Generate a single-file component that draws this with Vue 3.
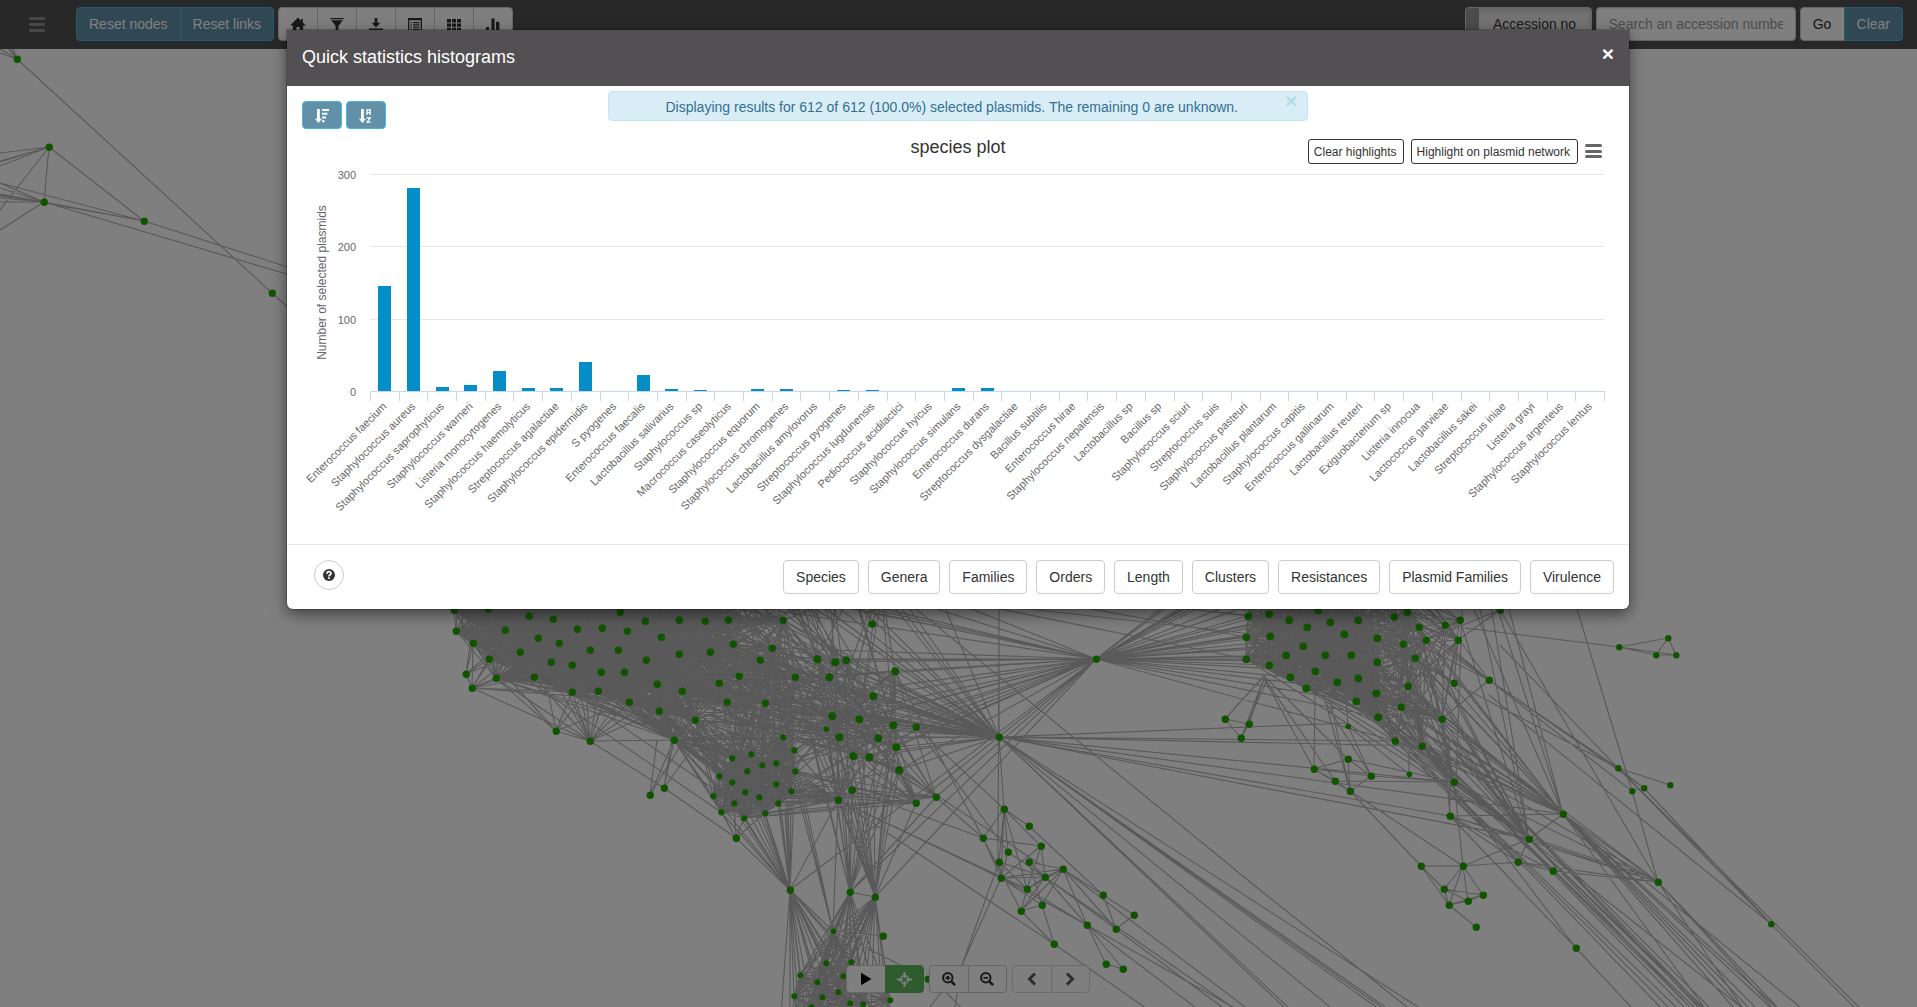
<script setup>
import { ref, computed } from 'vue'

// ---------- plasmid network ----------
const pts = (s) => s.trim().split(/\s+/).map((p) => p.split(',').map(Number))

const groups = {
  core: pts(`454,610 488,609 529,616 553,619 620,612 645,621 679,620 705,621 728,620 456,631 505,630 577,629 602,628
    627,631 661,637 538,638 559,643 733,644 489,659 520,652 590,650 618,650 679,654 710,652 551,662 572,665 646,660
    496,678 534,677 601,672 624,672 657,684 682,691 719,683 572,692 598,691 629,702 659,711 473,643`),
  rim: pts(`783,620 772,648 760,660 739,676 795,677 727,702 765,703 695,720 674,740`),
  mid: pts(`817,659 835,662 846,660 829,677 895,671 873,696 832,716 859,719 893,725 839,737 878,738 896,747 853,756 869,757 899,770`),
  low: pts(`732,758 751,754 794,750 762,765 776,763 747,771 719,776 732,782 795,771 776,784 791,791 713,796 745,792
    759,797 734,803 778,803 721,812 744,818 765,813 783,737`),
  base: pts(`826,963 851,962 800,975 817,982 843,976 794,996 822,997 838,992 850,1003 863,1004 890,1000 811,1007`),
  east: pts(`1248,616 1269,614 1318,610 1289,620 1307,627 1330,622 1358,620 1246,637 1270,636 1344,634 1377,638 1303,646
    1246,659 1286,655 1325,655 1351,655 1269,665 1315,671 1377,662 1290,677 1337,682 1358,678 1306,688 1376,693 1356,701 1378,717`),
  eastRim: pts(`1394,617 1407,612 1419,627 1403,644 1426,640 1415,658 1408,686 1401,707 1395,741 1422,746 1442,719`),
  single: pts(`872,624 466,674 472,688 556,731 590,741 916,727 650,795 664,788 736,838 838,800 852,790 916,803 936,797
    790,890 850,892 875,897 883,936 928,979 1096,659 999,737 1225,719 1249,724 1241,738 1004,809 1029,826 983,838
    1041,846 1008,852 999,862 1029,862 1063,869 1001,878 1045,877 1027,889 1021,911 1042,905 1087,925 1054,944
    1103,895 1134,915 1116,929 1106,964 1123,969 1445,625 1460,620 1500,610 1458,640 1454,683 1489,680 1314,769
    1348,759 1371,776 1335,781 1350,791 1454,782 1450,816 1563,814 1529,839 1518,862 1553,871 1421,866 1463,866
    1444,889 1483,895 1468,901 1449,905 1476,927 1576,948 1658,882 17,59 49,147 44,202 144,221 272,293`),
  small: pts(`1619,647 1668,638 1656,655 1676,655 1618,768 1632,791 1644,788 1670,785 1771,924`),
  tiny: pts(`826,729 833,931 1348,726 1409,774`),
}

const radius = { core: 3.7, rim: 3.7, mid: 4, low: 3.1, base: 3, east: 3.9, eastRim: 3.7, single: 3.7, small: 3.2, tiny: 2.8 }
const nodes = Object.entries(groups).flatMap(([name, list]) => list.map(([x, y]) => ({ x: x + 0.3, y: y + 0.3, r: radius[name] })))

let seed = 11
const rand = () => (seed = (seed * 16807) % 2147483647) / 2147483647
const edges = []
const link = (a, b) => edges.push([a, b])
const mesh = (list, density = 1) => {
  for (let i = 0; i < list.length; i++)
    for (let j = i + 1; j < list.length; j++) if (rand() < density) link(list[i], list[j])
}
const cross = (from, to, density = 1) => from.forEach((a) => to.forEach((b) => rand() < density && link(a, b)))
const fan = (hub, list, density = 1) => cross([hub], list, density)
const chain = (s) => s.split('|').forEach((seg) => {
  const p = pts(seg)
  for (let i = 1; i < p.length; i++) link(p[i - 1], p[i])
})

const { core, rim, mid, low, base, east, eastRim } = groups
const upper = pts('460,570 500,540 540,580 580,520 620,560 660,500 690,570 720,530 740,580 700,460 640,590 560,560 480,590')
const upperMid = pts('780,560 800,590 840,540 880,580 820,480 760,500 900,500')
const upperEast = pts('1260,560 1290,580 1320,540 1350,570 1380,560 1400,590 1300,500 1340,480')

mesh([...core, ...upper])
cross(core, rim, 0.5)
cross(upper, rim, 0.55)
mesh([...rim, ...mid], 0.2)
cross(core.slice(12), mid, 0.08)
cross([...upper, ...upperMid], mid, 0.17)
cross(upperMid, core, 0.12)
mesh(low)
cross(low, rim, 0.4)
cross(low, core.slice(20), 0.13)
cross(low, mid, 0.06)
fan([674, 740], core.slice(15), 0.9)
fan([674, 740], low)
fan([590, 741], pts('560,690 568,692 572,692 580,692 586,692 598,691 606,694 620,700 629,702 640,708 655,712 674,740 534,677 496,678 472,688'))
fan([556, 731], pts('496,678 510,680 545,676 572,692 590,741 629,702 601,672'))
fan([466, 674], pts('473,643 489,659 505,640 520,652 472,688 472,630'))
fan([472, 688], pts('473,643 489,659 520,652 496,678 534,677 551,662 500,645 572,692 598,698'))
fan([650, 795], pts('657,740 674,740 690,730'))
fan([664, 788], pts('590,741 674,740 672,738 695,745 736,838'))
fan([736, 838], pts('721,812 744,818 732,782 734,803 713,796 765,813 790,890'))

fan([999, 737], [...mid, ...rim, ...upperMid])
fan([999, 737], core.slice(4), 0.45)
fan([999, 737], upper, 0.8)
fan([1096, 659], mid)
fan([1096, 659], pts('620,560 700,500 720,570 760,590 780,560 830,600 772,648 916,803 936,797 850,892 875,897 790,890 783,737 765,703 640,590 800,540'))
fan([1096, 659], [...east.slice(0, 20), ...upperEast])
fan([1096, 659], pts('1395,741 1356,701 1376,693 1378,717 1200,600 1215,590 1235,590'))
chain(`640,540 1225,600|700,530 1270,614|820,560 1246,637|760,560 1246,659|740,560 1290,620|860,590 1269,636|600,540 1248,616`)
const junctions = pts('838,800 916,803 936,797')
cross(junctions, mid, 0.6)
cross(junctions, [...low, ...rim], 0.2)
fan([838, 800], low)
cross(pts('850,892 875,897'), [...mid, ...junctions, [852, 790]], 0.7)
cross(pts('850,892 875,897'), pts('826,729 795,677 783,620 829,677 835,662'), 0.8)
fan([790, 890], low.slice(4))
fan([790, 890], pts('785,812 788,800 760,815 838,800 740,818'))
fan([833, 931], pts('783,737 795,771 794,750 850,892 875,897 838,800 790,890 883,936'))
const below = pts('790,1040 810,1050 830,1040 850,1045 870,1040 885,1040 800,1030')
mesh([...base, ...below])
cross(pts('790,890 850,892 875,897 833,931'), [...base, ...below])
chain(`790,890 780,1030|875,897 892,1040|850,892 875,897|833,931 928,979|852,790 838,800|852,790 916,727`)

// southern community and the long links that leave it
mesh(pts('1004,809 1008,852 999,862 1001,878 1045,877 1027,889 1041,846'), 0.75)
mesh(pts('1029,862 1045,877 1063,869 1027,889 1021,911 1042,905 1001,878'), 0.75)
chain(`983,838 1041,846|983,838 1004,809|983,838 1001,878|983,838 1021,911|983,838 936,797|1008,852 1045,877
  |1021,911 1054,944|1042,905 1054,944|1045,877 1087,925 1106,964 1123,969 1087,925|1027,889 1087,925|1001,878 1087,925
  |1063,869 1087,925|1063,869 1116,929|1103,895 1116,929 1134,915|1103,895 1029,826|1029,826 1004,809|1134,915 1063,869
  |838,800 1054,944 1150,1011|838,800 1001,878|852,790 983,838|916,727 1004,809|916,727 1008,852|899,770 1041,865
  |1087,925 1200,1011|1087,925 1240,1011|1045,877 1222,1007|1045,877 1232,1007|1063,869 1245,1007
  |999,862 962,965 930,1007|1001,878 962,965 955,1007|947,993 965,1012|895,671 983,838|838,800 1027,889
  |999,600 998,862|999,737 1004,809|999,737 999,600|905,600 1040,710 1260,890 1407,1007`)
fan([999, 737], pts('1348,723 1395,741 1422,746 1454,782 1450,816 1529,839 1563,814 1418,1007 1376,1007 1381,1007 1385,1007 1330,1007 1284,1007 1288,1007'))

// eastern community
mesh([...east, ...upperEast])
cross(east, eastRim, 0.36)
mesh(eastRim, 0.55)
cross(upperEast, eastRim, 0.4)
cross(pts('1445,625 1460,620 1458,640 1489,680'), [...eastRim, ...upperEast], 0.5)
fan([1454, 683], pts('1415,658 1458,640 1403,644 1377,638'))
fan([1442, 719], east.slice(8), 0.8)
const gates = pts('1529,839 1563,814')
cross(gates, eastRim, 0.95)
cross(gates, east.slice(9), 0.65)
fan([1454, 782], [...east.slice(14), ...eastRim], 0.4)
chain(`1563,814 1495,600|1563,814 1509,609|1563,814 1470,600|1529,839 1460,620|1529,839 1478,600|1529,839 1490,600
  |1500,610 1658,882|1577,609 1632,791 1658,882|1500,610 1426,640|1500,610 1458,640|1500,610 1480,570|1465,628 1619,647
  |1619,647 1668,638 1656,655 1676,655 1668,638|1619,647 1656,655|1619,647 1676,655
  |1489,680 1618,768|1486,678 1618,768|1489,680 1632,791|1489,680 1644,788|1454,683 1618,768|1500,645 1618,768
  |1618,768 1670,785|1618,768 1644,788 1632,791|1618,768 1771,924|1644,788 1771,924|1489,695 1771,924
  |1618,768 1862,1010|1771,924 1857,1010
  |1225,719 1249,724 1241,738 1225,719|1225,719 1262,678|1249,724 1264,678|1241,738 1264,678|1241,738 1266,682
  |1314,769 1348,759 1371,776 1350,791 1348,759|1314,769 1335,781 1350,791|1314,769 1371,776|1314,769 1350,791
  |1314,769 1315,690|1314,769 1262,675|1335,781 1262,675|1348,759 1264,676|1350,791 1325,700|1350,791 1330,700|1371,776 1325,702
  |1348,726 1346,700|1348,726 1371,776|1348,726 1409,774|1409,774 1409,750|1348,759 1454,782|1335,781 1454,782|1371,776 1454,782
  |1350,791 1421,866 1463,866 1350,791|1454,782 1463,866|1463,866 1518,862|1463,866 1529,839|1529,839 1518,862|1529,839 1563,814
  |1463,866 1444,889|1463,866 1449,905|1463,866 1468,901|1463,866 1483,895|1444,889 1449,905|1444,889 1483,895|1444,889 1468,901
  |1449,905 1483,895|1449,905 1468,901 1483,895|1421,866 1444,889|1421,866 1449,905 1476,927|1450,816 1449,740|1450,816 1563,814
  |1450,816 1529,839|1450,816 1518,862|1450,816 1553,871|1442,719 1450,816|1442,719 1454,782|1460,620 1442,719|1462,610 1456,782
  |1518,862 1553,871 1658,882|1518,862 1658,882|1529,839 1658,882|1450,816 1658,882|1454,782 1658,882|1422,746 1658,882
  |1563,814 1658,882|1442,719 1658,882|1529,837 1655,879|1422,746 1576,948|1450,816 1576,948 1632,1008
  |1395,741 1518,862|1408,750 1518,862|1420,750 1553,871`)
const exits = pts('1660,1007 1668,1007 1676,1007 1684,1007 1690,1007 1694,1007 1698,1007 1702,1007 1709,1007')
exits.forEach((p, i) => { link([1400 + i * 7, 738 + (i % 3) * 8], p) })
fan([1529, 839], pts('1690,1007 1700,1007 1703,1007 1741,1007'))
fan([1563, 814], pts('1704,1007 1733,1007 1741,1007 1748,1007 1755,1007 1770,1007 1776,1007 1800,1007'))
fan([1658, 882], pts('1742,1007 1772,1007 1777,1007'))

// north-west corner
chain(`17,59 272,293 300,318|49,147 144,221 300,271|49,147 44,202 144,221|0,153 49,147|0,161 49,147|0,162 49,147|0,166 49,147
  |0,210 49,147|0,183 44,202|0,188 44,202|0,194 44,202|0,196 44,202|0,198 44,202|0,202 44,202|0,230 44,202|0,183 144,221
  |44,202 300,278|0,195 144,221|0,53 17,59|0,49 17,59|6,46 17,59|9,46 17,59|12,46 17,59`)

const edgePath = edges.map(([a, b]) => `M${a[0]} ${a[1]}L${b[0]} ${b[1]}`).join('')

// ---------- histogram ----------
const species = ref([
  ['Enterococcus faecium', 145], ['Staphylococcus aureus', 281], ['Staphylococcus saprophyticus', 6],
  ['Staphylococcus warneri', 8], ['Listeria monocytogenes', 28], ['Staphylococcus haemolyticus', 4],
  ['Streptococcus agalactiae', 4], ['Staphylococcus epidermidis', 40], ['S pyogenes', 0], ['Enterococcus faecalis', 22],
  ['Lactobacillus salivarius', 3], ['Staphylococcus sp', 1], ['Macrococcus caseolyticus', 0], ['Staphylococcus equorum', 3],
  ['Staphylococcus chromogenes', 3], ['Lactobacillus amylovorus', 0], ['Streptococcus pyogenes', 1],
  ['Staphylococcus lugdunensis', 1], ['Pediococcus acidilactici', 0], ['Staphylococcus hyicus', 0],
  ['Staphylococcus simulans', 4], ['Enterococcus durans', 4], ['Streptococcus dysgalactiae', 0], ['Bacillus subtilis', 0],
  ['Enterococcus hirae', 0], ['Staphylococcus nepalensis', 0], ['Lactobacillus sp', 0], ['Bacillus sp', 0],
  ['Staphylococcus sciuri', 0], ['Streptococcus suis', 0], ['Staphylococcus pasteuri', 0], ['Lactobacillus plantarum', 0],
  ['Staphylococcus capitis', 0], ['Enterococcus gallinarum', 0], ['Lactobacillus reuteri', 0], ['Exiguobacterium sp', 0],
  ['Listeria innocua', 0], ['Lactococcus garvieae', 0], ['Lactobacillus sakei', 0], ['Streptococcus iniae', 0],
  ['Listeria grayi', 0], ['Staphylococcus argenteus', 0], ['Staphylococcus lentus', 0],
])
const axis = { left: 370, right: 1604, zero: 391.5, unit: 0.7235 }
const step = computed(() => (axis.right - axis.left) / species.value.length)
const bars = computed(() => species.value.map(([label, value], i) => {
  const cx = axis.left + (i + 0.5) * step.value
  const h = Math.round(value * axis.unit)
  return { label, cx, x: Math.round(cx - 6.1), y: 391 - h, h, tick: Math.round(cx + step.value / 2) + 0.5 }
}))
const grid = [[300, 174.5], [200, 246.5], [100, 319.5], [0, 391.5]]

const plots = ['Species', 'Genera', 'Families', 'Orders', 'Length', 'Clusters', 'Resistances', 'Plasmid Families', 'Virulence']
const tools = [
  'M7-.4-.8 7.600H1.800V13h3.600V9h3.200v4h3.600V7.600h2.600L11.800 4.600V1H10v1.700z',
  'M.4 0h13.200v1.200H.4zM1.200 2.200h11.600L8.400 8v4.500L5.600 14V8z',
  'M5.600 0h2.800v4.800h3L7 9.600 2.600 4.800h3zM0 10.500h14V14H0z',
  'M0 0h14v14H0zM1.300 2.300v10.400h11.400V2.300zM2.500 4h1.300v1.200H2.500zm2.600 0h6.400v1.200H5.100zM2.500 6.300h1.300v1.200H2.500zm2.600 0h6.400v1.200H5.100zM2.500 8.600h1.300v1.200H2.500zm2.600 0h6.400v1.200H5.100zM2.500 10.700h1.300v1.200H2.500zm2.600 0h6.400v1.200H5.100z',
  'M0 1h4v3.400H0zm5 0h4v3.400H5zm5 0h4v3.400h-4zM0 5.400h4v3.400H0zm5 0h4v3.400H5zm5 0h4v3.400h-4zM0 9.800h4v3.400H0zm5 0h4v3.400H5zm5 0h4v3.400h-4z',
  'M0 9h3v5H0zM5.400 0.600h3.200V14H5.400zM10 3.800h3.400V14H10z',
]
const query = ref('')
</script>

<template>
  <div class="page">
    <nav class="navbar">
      <span class="bars"><i></i><i></i><i></i></span>
      <div class="group">
        <button class="btn info">Reset nodes</button><button class="btn info">Reset links</button>
      </div>
      <div class="group icons">
        <button v-for="d in tools" :key="d" class="btn"><svg width="14" height="14" viewBox="0 0 14 14"><path fill-rule="evenodd" :d="d" /></svg></button>
      </div>
      <span class="grow"></span>
      <div class="toggle"><span class="handle"></span><span class="label">Accession no</span></div>
      <input v-model="query" class="search" placeholder="Search an accession number" />
      <div class="group last">
        <button class="btn go">Go</button><button class="btn info">Clear</button>
      </div>
    </nav>

    <main class="stage">
      <svg class="network" viewBox="0 49 1917 958" width="1917" height="958">
        <path class="edges" :d="edgePath" />
        <circle v-for="(n, i) in nodes" :key="i" :cx="n.x" :cy="n.y" :r="n.r" />
      </svg>
      <div class="controls">
        <div class="group small">
          <button class="btn"><svg width="12" height="14" viewBox="0 0 12 14"><path d="M1 .8 11.500 7 1 13.200z" /></svg></button>
          <button class="btn success"><svg width="15" height="15" viewBox="0 0 15 15" fill="none" stroke="#fff"><circle cx="7.500" cy="7.500" r="4" stroke-width="1.300" /><path d="M7.500 0v6M7.500 9v6M0 7.500h6M9 7.500h6" stroke-width="2" /></svg></button>
        </div>
        <div class="group small">
          <button v-for="z in ['in', 'out']" :key="z" class="btn"><svg width="14" height="14" viewBox="0 0 14 14" fill="none" stroke="#333"><circle cx="5.800" cy="5.800" r="4.700" stroke-width="2" /><path d="m9.300 9.300 3.800 3.800" stroke-width="2.600" /><path d="M3.500 5.800h4.600" stroke-width="1.800" /><path v-if="z === 'in'" d="M5.800 3.800v4" stroke-width="2.200" /></svg></button>
        </div>
        <div class="group small off">
          <button class="btn"><svg width="12" height="14" viewBox="0 0 12 14" fill="none" stroke="#333" stroke-width="3"><path d="M9 1.500 3.500 7 9 12.500" /></svg></button>
          <button class="btn"><svg width="12" height="14" viewBox="0 0 12 14" fill="none" stroke="#333" stroke-width="3"><path d="M3 1.500 8.500 7 3 12.500" /></svg></button>
        </div>
      </div>
    </main>

    <div class="backdrop"></div>

    <section class="modal">
      <header class="modal-header"><h4>Quick statistics histograms</h4><span class="close">×</span></header>
      <div class="modal-body">
        <div class="top-row">
          <div class="sorts">
            <button class="sort"><svg width="14" height="14" viewBox="0 0 14 14"><path d="M2 0h2.800v9.800H7L3.400 14 0 9.800h2zM7 0h7v2H7zm0 3.700h5.400v2H7zm0 3.700h4v2H7zm0 3.800h2.600v2H7z" /></svg></button>
            <button class="sort"><svg width="14" height="14" viewBox="0 0 14 14"><path d="M2 0h2.800v9.800H7L3.400 14 0 9.800h2z" /><path d="M8 6V.8h3.200V6M8 3.600h3.200M7.400 8.800h3.800l-3.200 4.400h3.600" fill="none" stroke="#fff" stroke-width="1.300" /></svg></button>
          </div>
          <div class="alert"><span>Displaying results for 612 of 612 (100.0%) selected plasmids. The remaining 0 are unknown.</span><b>×</b></div>
        </div>
        <div class="chart-head">
          <span class="chart-title">species plot</span>
          <button class="chart-btn clear">Clear highlights</button>
          <button class="chart-btn">Highlight on plasmid network</button>
          <span class="menu"><i></i><i></i><i></i></span>
        </div>
        <svg class="chart" viewBox="302 165 1312 379" width="1312" height="379">
          <g v-for="[v, y] in grid" :key="v">
            <line v-if="v" :x1="axis.left" :x2="axis.right" :y1="y" :y2="y" stroke="#e6e6e6" />
            <text class="tick-label" x="356" :y="y + 4" text-anchor="end">{{ v }}</text>
          </g>
          <text class="axis-title" transform="translate(326 282.500) rotate(-90)" text-anchor="middle">Number of selected plasmids</text>
          <rect v-for="b in bars" :key="b.label" :x="b.x" :y="b.y" width="13" :height="b.h" fill="#058dc7" />
          <path class="axis" :d="`M${axis.left} 391.5H${axis.right + 1}M370.5 391v10` + bars.map((b) => `M${b.tick} 391v10`).join('')" />
          <text v-for="b in bars" :key="b.label" class="tick-label" :transform="`translate(${b.cx + 3} 407) rotate(-45)`" text-anchor="end">{{ b.label }}</text>
        </svg>
      </div>
      <footer class="modal-footer">
        <button class="help"><svg width="12" height="12" viewBox="0 0 12 12"><circle cx="6" cy="6" r="6" fill="#333" /><path d="M4 4.700C4 2 8 2.200 8 4.400 8 5.900 6 5.700 6 7.400M6 8.200v1.800" fill="none" stroke="#fff" stroke-width="1.700" /></svg></button>
        <span class="grow"></span>
        <button v-for="p in plots" :key="p" class="btn plot">{{ p }}</button>
      </footer>
    </section>
  </div>
</template>

<style>
body { margin: 0; overflow: hidden; }
</style>

<style scoped>
.page, .page button, .page input { font-family: "Liberation Sans", Arial, sans-serif; font-size: 14px; line-height: 20px; color: #333; }
.page { position: relative; width: 100vw; height: 100vh; overflow: hidden; display: flex; flex-direction: column; background: #fff; }
.page * { box-sizing: border-box; }
svg { display: block; overflow: visible; }
.grow { flex: 1; }
.navbar { height: 49px; flex: none; display: flex; align-items: flex-start; padding: 7px 14px 0 29px; background: #535053; position: relative; z-index: 1; }
.bars { width: 16px; margin: 10px 31px 0 0; display: flex; flex-direction: column; gap: 3px; }
.bars i { height: 3px; background: #8f8f8f; border-radius: 1px; }
.group { display: flex; margin-right: 4px; }
.group.last { margin-right: 0; }
.btn { height: 34px; padding: 6px 12px; margin: 0; background: #fff; border: 1px solid #ccc; border-radius: 4px; white-space: nowrap; }
.group .btn { border-radius: 0; }
.group .btn + .btn { margin-left: -1px; }
.group .btn:first-child { border-radius: 4px 0 0 4px; }
.group .btn:last-child { border-radius: 0 4px 4px 0; }
.page .btn.info { background: #6190a8; border-color: #46b8da; color: #fff; }
.icons .btn { width: 40px; padding: 10px 12px 8px; }
.icons svg { fill: #333; }
.toggle { width: 127px; height: 34px; margin-right: 4px; display: flex; border: 1px solid #ccc; border-radius: 4px; background: #e6e6e6; overflow: hidden; box-shadow: inset 0 3px 5px rgba(0, 0, 0, .125); }
.handle { width: 13px; background: #999; }
.label { flex: 1; padding: 6px 0; text-align: center; }
.search { width: 200px; height: 34px; margin: 0 4px 0 0; padding: 6px 12px; border: 1px solid #ccc; border-radius: 4px; background: #fff; box-shadow: inset 0 1px 1px rgba(0, 0, 0, .075); }
.search::placeholder { color: #999; opacity: 1; }
.btn.go { width: 45px; }

.stage { flex: 1; display: flex; justify-content: center; align-items: flex-end; padding: 0 0 14px 19px; }
.network { position: absolute; left: 0; top: 49px; overflow: hidden; }
.network circle { fill: #22a800; }
.edges { stroke: #b3b3b3; stroke-width: 1.150; fill: none; }
.controls { position: relative; display: flex; gap: 5px; }
.controls .group { margin: 0; }
.small .btn { width: 39.500px; height: 28px; padding: 0; display: grid; place-items: center; }
.small .btn.success { background: #5cb85c; border-color: #5cb85c; }
.off { opacity: .8; }

.backdrop { position: absolute; inset: 0; background: rgba(0, 0, 0, .5); z-index: 2; }
.modal { position: absolute; z-index: 3; left: 287px; top: 30px; width: 1342px; height: 579px; display: flex; flex-direction: column; background: #fff; border-radius: 0 0 6px 6px; box-shadow: 0 0 0 1px rgba(0, 0, 0, .2), 0 5px 15px rgba(0, 0, 0, .5); }
.modal-header { height: 56px; padding: 14px 15px; display: flex; justify-content: space-between; background: #535053; color: #fff; }
h4 { margin: 0; font-size: 18px; font-weight: 500; line-height: 27px; }
.close { font-size: 21px; font-weight: 700; line-height: 20px; }
.modal-body { height: 458px; padding: 5px 15px 0; }
.top-row { height: 43px; display: grid; grid-template-columns: 1fr 700px 1fr; align-items: start; }
.sorts { display: flex; gap: 4px; margin-top: 10px; }
.sort { width: 40px; height: 28px; padding: 1px 0 0; display: grid; place-items: center; background: #6190a8; border: 1px solid #46b8da; border-radius: 4px; }
.sort svg { fill: #fff; }
.alert { height: 30px; display: flex; justify-content: flex-end; padding-right: 10px; background: #d9edf7; border: 1px solid #bce8f1; border-radius: 4px; color: #31708f; line-height: 30px; }
.alert b { width: 12px; margin-left: 47px; font-size: 21px; line-height: 18px; color: #b3dce8; }
.chart-head { position: relative; height: 31px; display: flex; justify-content: flex-end; align-items: flex-start; padding: 5px 12px 0 0; }
.chart-title { position: absolute; left: 0; right: 0; top: 2px; text-align: center; font-size: 18px; line-height: 22px; }
.chart-btn.chart-btn { position: relative; height: 25px; margin-right: 7px; padding: 1px 7px 0 5px; border: 1px solid #333; border-radius: 3px; background: #fff; font-size: 12px; line-height: 22px; }
.chart-btn.clear { padding-right: 6px; }
.menu { width: 17px; padding-top: 5px; display: flex; flex-direction: column; gap: 2.500px; }
.menu i { height: 3px; border-radius: 1.500px; background: #666; }
.chart { font-family: "Liberation Sans", Arial, sans-serif; }
.tick-label { font-size: 11px; fill: #666; }
.axis-title { font-size: 12px; fill: #666; }
.axis { stroke: #ccd6eb; fill: none; }
.modal-footer { height: 65px; display: flex; align-items: flex-start; padding: 15px 15px 0 27px; border-top: 1px solid #e5e5e5; }
.help { width: 30px; height: 30px; padding: 0; display: grid; place-items: center; background: #fff; border: 1px solid #ccc; border-radius: 50%; }
.plot { margin-left: 8.900px; }
</style>
